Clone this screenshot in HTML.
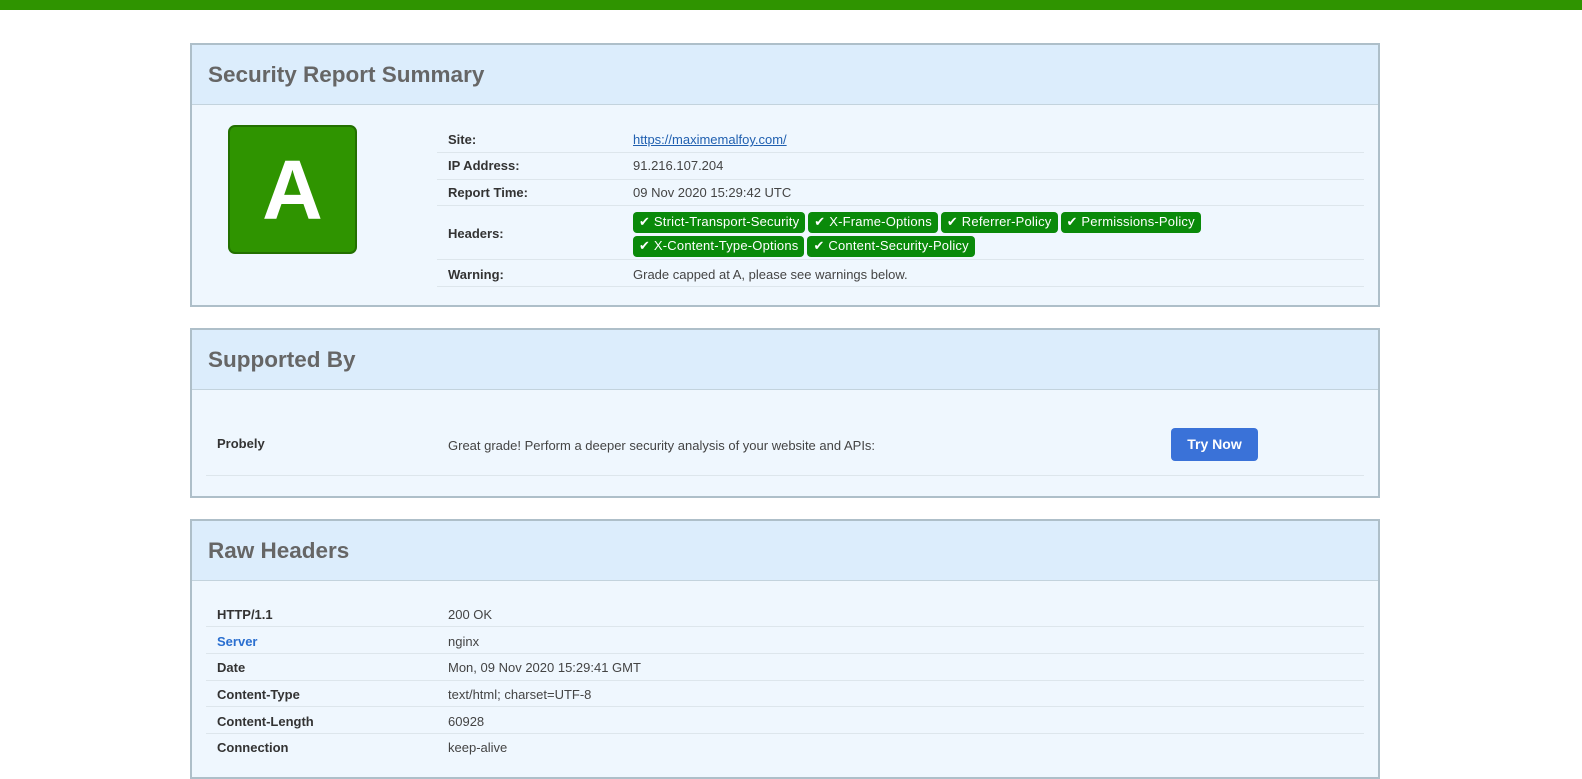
<!DOCTYPE html>
<html><head><meta charset="utf-8"><style>
*{margin:0;padding:0;box-sizing:border-box}
body{width:1582px;height:756px;overflow:hidden;background:#fff;font-family:"Liberation Sans",sans-serif;font-size:13px;color:#444;position:relative}
.bar{position:absolute;left:0;top:0;width:1582px;height:10px;background:#2f9400}
.p{position:absolute;left:190px;width:1190px;border:2px solid #aebfc9;background:#eff7fe}
.h{height:60px;background:#dcedfc;border-bottom:1px solid #c3d3dd;font-size:22.5px;font-weight:bold;color:#666;padding:17px 0 0 16px}
.a{position:absolute}
.row{position:absolute;border-bottom:1px solid #dde6ec}
.b{font-weight:bold;color:#333}
.badge{display:inline-block;background:#0a8a0a;color:#fff;border-radius:4px;padding:1px 6px 2px 6px;margin-right:3px;font-size:13px;line-height:18px;letter-spacing:0.2px}
.grade{position:absolute;left:36px;top:80px;width:129px;height:129px;background:#2f9400;border:2px solid #237000;border-radius:7px;color:#fff;font-weight:bold;font-size:84px;text-align:center;line-height:127px}
</style></head><body>
<div class="bar"></div>

<div class="p" style="top:43px;height:264px">
<div class="h">Security Report Summary</div>
<div class="grade">A</div>
<div class="row" style="left:245px;top:95px;width:927px;height:13px"></div>
<div class="row" style="left:245px;top:108px;width:927px;height:27px"></div>
<div class="row" style="left:245px;top:135px;width:927px;height:26px"></div>
<div class="row" style="left:245px;top:161px;width:927px;height:54px"></div>
<div class="row" style="left:245px;top:215px;width:927px;height:27px"></div>
<div class="a b" style="left:256px;top:87px">Site:</div>
<div class="a" style="left:441px;top:87px;color:#2060b0;text-decoration:underline">https://maximemalfoy.com/</div>
<div class="a b" style="left:256px;top:113px">IP Address:</div>
<div class="a" style="left:441px;top:113px">91.216.107.204</div>
<div class="a b" style="left:256px;top:140px">Report Time:</div>
<div class="a" style="left:441px;top:140px">09 Nov 2020 15:29:42 UTC</div>
<div class="a b" style="left:256px;top:181px">Headers:</div>
<div class="a" style="left:441px;top:165px;width:720px;line-height:24px">
<span class="badge">✔ Strict-Transport-Security</span><span class="badge">✔ X-Frame-Options</span><span class="badge">✔ Referrer-Policy</span><span class="badge">✔ Permissions-Policy</span><br><span class="badge">✔ X-Content-Type-Options</span><span class="badge">✔ Content-Security-Policy</span></div>
<div class="a b" style="left:256px;top:222px">Warning:</div>
<div class="a" style="left:441px;top:222px">Grade capped at A, please see warnings below.</div>
</div>

<div class="p" style="top:328px;height:170px">
<div class="h">Supported By</div>
<div class="row" style="left:14px;top:80px;width:1158px;height:66px"></div>
<div class="a b" style="left:25px;top:106px">Probely</div>
<div class="a" style="left:256px;top:108px">Great grade! Perform a deeper security analysis of your website and APIs:</div>
<div class="a" style="left:979px;top:98px;width:87px;height:33px;background:#3a72d8;border-radius:4px;color:#fff;font-weight:bold;font-size:14px;text-align:center;line-height:32px">Try Now</div>
</div>

<div class="p" style="top:519px;height:260px">
<div class="h">Raw Headers</div>
<div class="row" style="left:14px;top:80px;width:1158px;height:26px"></div>
<div class="row" style="left:14px;top:106px;width:1158px;height:27px"></div>
<div class="row" style="left:14px;top:133px;width:1158px;height:27px"></div>
<div class="row" style="left:14px;top:160px;width:1158px;height:26px"></div>
<div class="row" style="left:14px;top:186px;width:1158px;height:27px"></div>
<div class="a b" style="left:25px;top:86px">HTTP/1.1</div><div class="a" style="left:256px;top:86px">200 OK</div>
<div class="a b" style="left:25px;top:113px;color:#2a6fd0">Server</div><div class="a" style="left:256px;top:113px">nginx</div>
<div class="a b" style="left:25px;top:139px">Date</div><div class="a" style="left:256px;top:139px">Mon, 09 Nov 2020 15:29:41 GMT</div>
<div class="a b" style="left:25px;top:166px">Content-Type</div><div class="a" style="left:256px;top:166px">text/html; charset=UTF-8</div>
<div class="a b" style="left:25px;top:193px">Content-Length</div><div class="a" style="left:256px;top:193px">60928</div>
<div class="a b" style="left:25px;top:219px">Connection</div><div class="a" style="left:256px;top:219px">keep-alive</div>
</div>
</body></html>
